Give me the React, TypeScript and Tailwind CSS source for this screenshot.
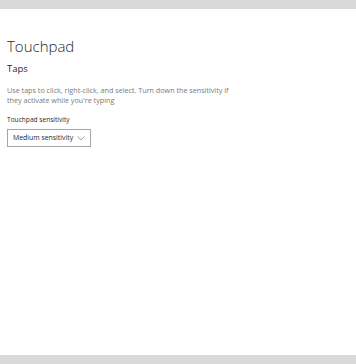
export default function App() {
  return (
    <div className="flex flex-col h-[364px] w-[356px] bg-white font-['Open_Sans',sans-serif]">
      <div className="h-[9px] bg-[#d9d9d9]" />
      <div className="flex-1 px-[7px] pt-[27px]">
        <h1 className="text-[15px] leading-[20px] font-light text-[#1f1f1f]">Touchpad</h1>
        <h2 className="mt-[6px] text-[9.5px] leading-[13px] font-medium text-[#1f1f1f]">Taps</h2>
        <p className="mt-[10px] w-[232px] text-[7.2px] leading-[10px] text-[#7a7a7a]">
          Use taps to click, right-click, and select. Turn down the sensitivity if they activate while you're typing
        </p>
        <div className="mt-[10px] text-[6.6px] leading-[9px] text-[#2b2b2b]">Touchpad sensitivity</div>
        <div className="mt-[5px] flex items-center justify-between w-[84px] h-[18px] border border-[#a6a6a6] pl-[5px] pr-[5px]">
          <span className="text-[6.9px] text-[#1f1f1f]">Medium sensitivity</span>
          <svg width="8" height="5" viewBox="0 0 8 5" fill="none" stroke="#8a8a8a" strokeWidth="0.8">
            <path d="M0.5 0.5 L4 4 L7.5 0.5" />
          </svg>
        </div>
      </div>
      <div className="h-[9px] bg-[#d9d9d9]" />
    </div>
  )
}
